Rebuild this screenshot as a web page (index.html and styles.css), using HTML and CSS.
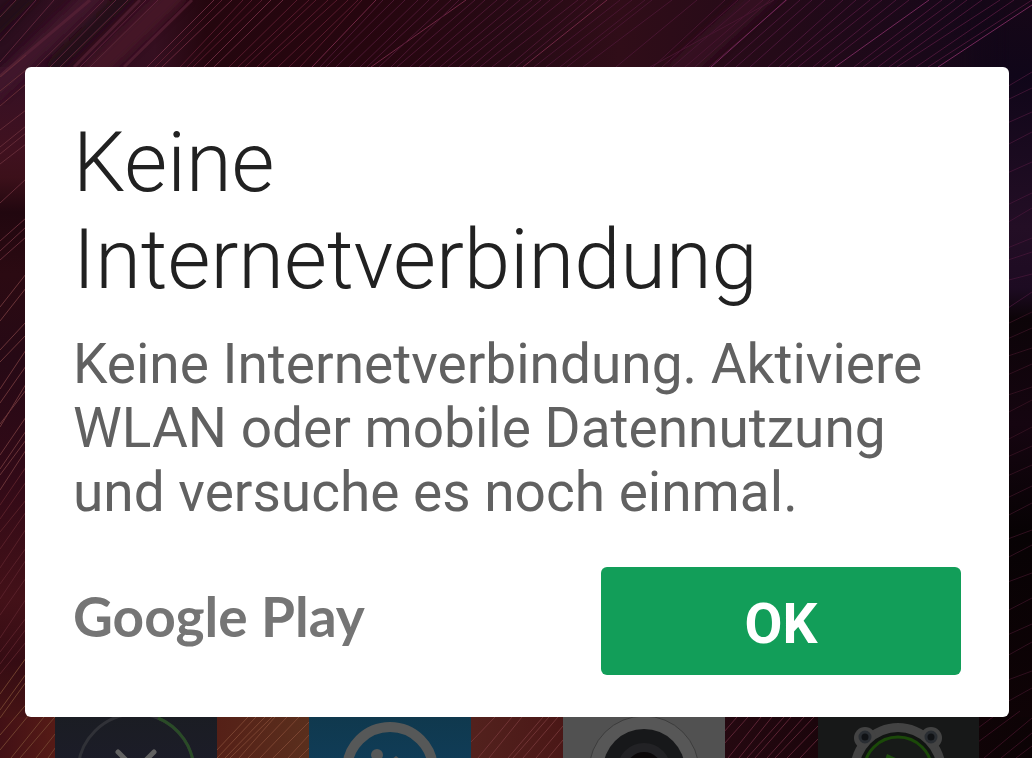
FILE: index.html
```html
<!DOCTYPE html>
<html lang="de">
<head>
<meta charset="utf-8">
<meta name="viewport" content="width=device-width, initial-scale=1">
<title>Keine Internetverbindung</title>
<link rel="stylesheet" href="styles.css">
</head>
<body>
<svg class="wallpaper" viewBox="0 0 1032 758" preserveAspectRatio="xMidYMid slice" aria-hidden="true">
  <defs>
    <linearGradient id="top" x1="0" x2="1" y1="0" y2="0">
      <stop offset="0" stop-color="#2b0e1e"/><stop offset=".15" stop-color="#350f20"/>
      <stop offset=".2" stop-color="#24060e"/><stop offset=".36" stop-color="#26060f"/>
      <stop offset=".5" stop-color="#260a14"/><stop offset=".6" stop-color="#300d18"/>
      <stop offset=".75" stop-color="#240a18"/><stop offset=".9" stop-color="#190819"/>
      <stop offset="1" stop-color="#100717"/>
    </linearGradient>
    <linearGradient id="left" x1="0" x2="0" y1="0" y2="1">
      <stop offset="0" stop-color="#341025"/><stop offset=".12" stop-color="#40111f"/>
      <stop offset=".16" stop-color="#3c101a"/><stop offset=".21" stop-color="#21070f"/>
      <stop offset=".3" stop-color="#2b0a12"/><stop offset=".42" stop-color="#260915"/>
      <stop offset=".6" stop-color="#320a17"/><stop offset=".77" stop-color="#431118"/>
      <stop offset=".86" stop-color="#350c13"/><stop offset="1" stop-color="#501815"/>
    </linearGradient>
    <linearGradient id="right" x1="0" x2="0" y1="0" y2="1">
      <stop offset="0" stop-color="#160717"/><stop offset=".1" stop-color="#100619"/>
      <stop offset=".3" stop-color="#230e25"/><stop offset=".38" stop-color="#1d0b22"/>
      <stop offset=".42" stop-color="#0c0408"/><stop offset=".56" stop-color="#150510"/>
      <stop offset=".7" stop-color="#070204"/><stop offset="1" stop-color="#100306"/>
    </linearGradient>
    <linearGradient id="bottom" x1="0" x2="1" y1="0" y2="0">
      <stop offset="0" stop-color="#421015"/><stop offset=".055" stop-color="#561b16"/>
      <stop offset=".21" stop-color="#552017"/><stop offset=".3" stop-color="#5a2f1d"/>
      <stop offset=".46" stop-color="#52211d"/><stop offset=".54" stop-color="#4b1817"/>
      <stop offset=".69" stop-color="#260911"/><stop offset=".8" stop-color="#1a050b"/>
      <stop offset="1" stop-color="#0c0305"/>
    </linearGradient>
    <linearGradient id="blue" x1="0" x2="0" y1="0" y2="1">
      <stop offset="0" stop-color="#0f374a"/><stop offset="1" stop-color="#103d59"/>
    </linearGradient>
    <linearGradient id="dark" x1="0" x2="0" y1="0" y2="1">
      <stop offset="0" stop-color="#1a1d21"/><stop offset="1" stop-color="#1c1c29"/>
    </linearGradient>
    <linearGradient id="fade" x1="0" x2="1" y1="0" y2="0">
      <stop offset="0" stop-color="#fff" stop-opacity="0"/><stop offset="1" stop-color="#fff"/>
    </linearGradient>
    <mask id="right-edge"><rect x="960" width="50" height="758" fill="url(#fade)"/><rect x="1009" width="23" height="758" fill="#fff"/></mask>
    <filter id="soft" x="-10%" y="-10%" width="120%" height="120%"><feGaussianBlur stdDeviation="4"/></filter>
  </defs>
  <rect width="1032" height="758" fill="url(#top)"/>
  <rect y="67" width="100" height="691" fill="url(#left)"/>
  <rect x="960" width="72" height="758" fill="url(#right)" mask="url(#right-edge)"/>
  <rect y="717" width="1032" height="41" fill="url(#bottom)"/>

  <g fill="none" filter="url(#soft)">
    <path stroke="#40122a" stroke-width="20" d="M100-10L-10 94"/>
    <path stroke="#451325" stroke-width="22" d="M180-10L90 76"/>
    <path stroke="#210918" stroke-width="14" d="M35-10L-10 34M132-10L50 70"/>
    <path stroke="#3a1029" stroke-width="24" d="M770-12L675 75" opacity=".6"/>
  </g>

  <g class="streaks">
    <path stroke="#5b2439" stroke-width="3" d="M90 0L0 76M140 0L74 67M192 0L124 67" opacity=".6"/>
    <path stroke="#5b2439" d="M16 0L0 17M36 0L0 41M54 0L0 62M104 0L36 67M116 0L50 67M128 0L60 67M146 0L80 67M158 0L90 67"/>
    <path stroke="#66273b" d="M214 0L147 67M232 0L162 67M271 0L204 67M283 0L214 67"/>
    <path stroke="#571a2d" d="M222 0L155 67M243 0L180 67M252 0L187 67M262 0L193 67M297 0L229 67M309 0L238 67M316 0L245 67M328 0L257 67M337 0L263 67M348 0L278 67M358 0L289 67M362 0L300 67"/>
    <path stroke="#702744" d="M376 0L312 67M466 0L371 67M607 0L523 67"/>
    <path stroke="#4b1732" d="M383 0L320 67M394 0L326 67M405 0L336 67M418 0L349 67M429 0L360 67M439 0L367 67M451 0L379 67M459 0L391 67M475 0L397 67M485 0L410 67M497 0L419 67M508 0L429 67M520 0L440 67M532 0L448 67M541 0L459 67M550 0L471 67M563 0L480 67M578 0L492 67M587 0L508 67M598 0L516 67"/>
    <path stroke="#471530" d="M620 0L534 67M632 0L546 67M645 0L560 67M652 0L567 67M672 0L583 67M697 0L616 67M725 0L653 67M738 0L662 67M750 0L672 67M763 0L685 67M770 0L695 67M774 0L650 67M787 0L709 67"/>
    <path stroke="#491638" d="M800 0L724 67M812 0L736 67M825 0L750 67M843 0L768 67M856 0L779 67M870 0L787 67M882 0L798 67M896 0L813 67M909 0L822 67M942 0L854 67M955 0L863 67M967 0L878 67M982 0L889 67M1000 0L897 67M1014 0L916 67M1032 0L928 67"/>
    <path stroke="#74285a" d="M929 0L835 67M1032 5L938 67M786 0L711 67"/>
    <path stroke="#632b37" d="M0 77L26 55M0 91L26 70M0 106L26 84M0 130L26 110M0 147L26 126M0 154L26 133M0 164L26 144M0 203L26 179M0 241L26 218M0 251L26 227M0 260L26 237"/>
    <path stroke="#6a3438" d="M0 307L26 274M0 321L26 288M0 350L26 322M0 362L26 335M0 389L26 350M0 403L26 366M0 424L26 390M0 427L26 384M0 455L26 417M0 469L26 431M0 475L26 440M0 490L26 450"/>
    <path stroke="#582029" d="M0 505L26 467M0 519L26 482M0 532L26 500M0 549L26 512M0 568L26 529M0 584L26 548M0 599L26 560M0 615L26 578M0 638L26 599M0 652L26 618M0 664L26 629M0 674L26 642"/>
    <path stroke="#70402e" d="M0 694L26 658M0 710L26 674M0 718L26 682M0 735L30 700M0 750L38 704M11 758L52 707M20 758L60 711M36 758L67 719M48 758L76 719"/>
    <path stroke="#3d1434" d="M1000 91L1032 72M1005 101L1032 88M1005 124L1032 112M1005 146L1032 132M1005 174L1032 162M1005 206L1032 193M1005 224L1032 208M1005 249L1032 238M1005 261L1032 252M1005 281L1032 274M1005 310L1032 292"/>
    <path stroke="#30101f" d="M1005 325L1032 312M1005 340L1032 328M1005 357L1032 348M1005 376L1032 364M1005 396L1032 387M1005 414L1032 400M1005 441L1032 427M1005 458L1032 446M1005 477L1032 465M1005 499L1032 486M1005 517L1032 503M1005 540L1032 530M1005 559L1032 545M1005 583L1032 573M1005 612L1032 598M1005 636L1032 624M1005 657L1032 642M1005 681L1032 671M1005 703L1032 688"/>
    <path stroke="#7b4431" d="M216 751L248 717M217 758L256 717M225 758L265 717M230 758L272 717M239 758L275 717M248 758L287 717M260 758L299 717M273 758L309 722M288 758L309 735M299 758L309 748"/>
    <path stroke="#703435" d="M471 742L495 717M478 758L512 717M489 758L522 717M508 758L543 717M513 758L549 717M523 758L558 717M536 758L563 726M548 758L563 740"/>
    <path stroke="#5b2434" d="M724 732L737 717M724 744L748 717M728 758L761 717M739 758L772 717M747 758L784 717M755 758L791 717M767 758L804 717M775 758L814 717M787 758L818 726M800 758L818 739"/>
    <path stroke="#371021" d="M978 728L1001 711M978 742L1020 711M984 758L1032 718M1001 758L1032 733M1016 758L1032 746"/>
  </g>

  <g class="app-icons">
    <rect x="55" y="700" width="162" height="70" fill="url(#dark)"/>
    <circle cx="136" cy="772" r="58" fill="none" stroke="#303137" stroke-width="3"/>
    <path d="M158 718A58 58 0 0 1 194 772" fill="none" stroke="#2a4b27" stroke-width="3"/>
    <path d="M118 752L136 770L154 752" fill="none" stroke="#626262" stroke-width="5" stroke-linecap="round"/>

    <rect x="309" y="700" width="162" height="70" fill="url(#blue)"/>
    <circle cx="390" cy="770" r="43" fill="none" stroke="#565858" stroke-width="10"/>
    <circle cx="377" cy="755" r="6" fill="#565858"/>
    <path d="M392 759L396 756L400 759Z" fill="#565858"/>

    <rect x="563" y="700" width="162" height="70" fill="#515151"/>
    <circle cx="644" cy="771" r="55" fill="#575757" stroke="#3c3c3c"/>
    <circle cx="644" cy="770" r="41" fill="#17181a"/>
    <circle cx="644" cy="770" r="27" fill="#222225"/>
    <circle cx="644" cy="770" r="18" fill="#0b0809"/>

    <rect x="818" y="700" width="161" height="70" fill="#171818"/>
    <g fill="#434343">
      <circle cx="898" cy="771" r="48"/><circle cx="865" cy="738" r="11"/><circle cx="931" cy="738" r="11"/>
    </g>
    <g fill="#101215" stroke="#292d32" stroke-width="3">
      <circle cx="865" cy="737" r="5"/><circle cx="931" cy="737" r="5"/>
    </g>
    <circle cx="898" cy="771" r="39" fill="#111412"/>
    <circle cx="898" cy="771" r="34" fill="#171a18" stroke="#1b4909" stroke-width="3"/>
    <path d="M887 754L900 760H885Z" fill="#215010"/>
  </g>
</svg>

<main class="screen">
  <section class="dialog" role="alertdialog" aria-labelledby="title" aria-describedby="message">
    <h1 class="title" id="title">Keine Internetverbindung</h1>
    <p class="message" id="message">Keine Internetverbindung. Aktiviere WLAN oder mobile Datennutzung und versuche es noch einmal.</p>
    <footer class="actions">
      <span class="brand">Google Play</span>
      <button class="confirm" type="button">OK</button>
    </footer>
  </section>
</main>
</body>
</html>
```
FILE: styles.css
```css
* {
  box-sizing: border-box;
}

body {
  margin: 0;
  background: #1d0712;
  font-family: Roboto, "Noto Sans", sans-serif;
}

.wallpaper {
  position: fixed;
  inset: 0;
  z-index: -1;
  width: 100%;
  height: 100%;
}

.streaks {
  fill: none;
  stroke-width: 1;
}

.screen {
  padding: 67px 23px 41px 25px;
}

.dialog {
  padding: 47px 48px 42px;
  border-radius: 6px;
  background: #fff;
}

.title {
  margin: 0 0 24px;
  color: #212121;
  font-size: 83px;
  font-weight: 300;
  line-height: 97px;
}

.message {
  margin: 0 0 43px;
  color: #616161;
  font-size: 55px;
  line-height: 64px;
}

.actions {
  display: flex;
  flex-wrap: wrap;
  align-items: center;
  justify-content: space-between;
  gap: 24px;
}

.brand {
  padding-bottom: 10px;
  color: #757575;
  font-family: Lato, sans-serif;
  font-size: 55px;
  font-weight: 700;
  line-height: 64px;
}

.confirm {
  flex: 0 1 360px;
  padding: 25px 24px 19px;
  border: 0;
  border-radius: 6px;
  background: #129e59;
  color: #fff;
  font-family: inherit;
  font-size: 55px;
  font-weight: 700;
  line-height: 64px;
  cursor: pointer;
}
```
